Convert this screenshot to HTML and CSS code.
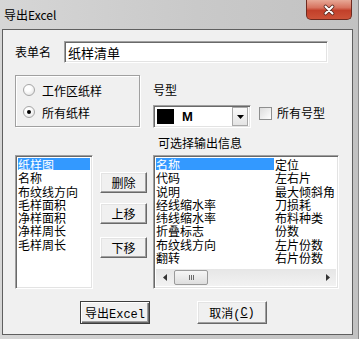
FILE: index.html
```html
<!DOCTYPE html>
<html lang="zh">
<head>
  <meta charset="UTF-8">
  <title>导出Excel</title>
  <link rel="stylesheet" href="styles.css">
</head>
<body>

  <div class="window">
    <div class="titlebar">
      <span class="title">导出Excel</span>
      <div class="close-btn">
        <svg width="14" height="12" viewBox="0 0 14 12">
          <path d="M3.5 2.5 L10.5 9.5 M10.5 2.5 L3.5 9.5" stroke="#5a2a20" stroke-width="3.6" stroke-linecap="round"/>
          <path d="M3.5 2.5 L10.5 9.5 M10.5 2.5 L3.5 9.5" stroke="#fff" stroke-width="2" stroke-linecap="round"/>
        </svg>
      </div>
    </div>

    <div class="client">
      <div class="name-row">
        <label class="name-label">表单名</label>
        <div class="edit">纸样清单</div>
      </div>

      <div class="options-row">
        <div class="group">
          <div class="radio-row"><span class="radio"></span>工作区纸样</div>
          <div class="radio-row"><span class="radio checked"></span>所有纸样</div>
        </div>

        <div class="size-col">
          <div class="size-label">号型</div>
          <div class="size-row">
            <div class="combo">
              <span class="swatch"></span>
              <span class="combo-text">M</span>
              <span class="combo-btn">
                <svg width="7" height="4" viewBox="0 0 7 4"><path d="M0 0 H7 L3.5 4 Z" fill="#000"/></svg>
              </span>
            </div>
            <div class="check-row"><span class="checkbox"></span>所有号型</div>
          </div>
        </div>
      </div>

      <div class="out-label">可选择输出信息</div>

      <div class="lists-row">
        <div class="listbox left-list">
          <div class="item selected">纸样图</div>
          <div class="item">名称</div>
          <div class="item">布纹线方向</div>
          <div class="item">毛样面积</div>
          <div class="item">净样面积</div>
          <div class="item">净样周长</div>
          <div class="item">毛样周长</div>
        </div>

        <div class="btn-col">
          <div class="btn small first">删除</div>
          <div class="btn small second">上移</div>
          <div class="btn small third">下移</div>
        </div>

        <div class="listbox right-list">
          <div class="columns">
            <div class="item selected">名称</div>
            <div class="item">代码</div>
            <div class="item">说明</div>
            <div class="item">经线缩水率</div>
            <div class="item">纬线缩水率</div>
            <div class="item">折叠标志</div>
            <div class="item">布纹线方向</div>
            <div class="item">翻转</div>
            <div class="item">定位</div>
            <div class="item">左右片</div>
            <div class="item">最大倾斜角</div>
            <div class="item">刀损耗</div>
            <div class="item">布料种类</div>
            <div class="item">份数</div>
            <div class="item">左片份数</div>
            <div class="item">右片份数</div>
          </div>
          <div class="hscroll">
            <span class="arrow">
              <svg width="4" height="7" viewBox="0 0 4 7"><path d="M4 0 V7 L0 3.5 Z" fill="#333"/></svg>
            </span>
            <span class="track">
              <span class="thumb"><span class="grip"></span><span class="grip"></span><span class="grip"></span></span>
            </span>
            <span class="arrow">
              <svg width="4" height="7" viewBox="0 0 4 7"><path d="M0 0 V7 L4 3.5 Z" fill="#333"/></svg>
            </span>
          </div>
        </div>
      </div>

      <div class="bottom-row">
        <div class="btn wide default">导出Excel</div>
        <div class="btn wide">取消(<u>C</u>)</div>
      </div>
    </div>
  </div>

</body>
</html>
```

FILE: styles.css
```css
body {
  margin: 0;
  padding: 0;
  font-family: "Noto Sans CJK SC", sans-serif;
  font-size: 12px;
  color: #000;
}

.window {
  width: 358px;
  height: 339px;
  background: linear-gradient(to right, #d6d6d6, #c9c9c9 55%, #c2c2c2);
  border-right: 1px solid #8a8a8a;
  overflow: hidden;
}

.titlebar {
  height: 29px;
  display: flex;
  justify-content: space-between;
  align-items: flex-start;
}

.title {
  margin: 7px 0 0 4px;
  line-height: 16px;
}

.close-btn {
  width: 44px;
  height: 19px;
  margin-right: 6px;
  border: 1px solid #6e2a1f;
  border-top: none;
  border-radius: 0 0 5px 5px;
  background: linear-gradient(#e7a896 0%, #d7735f 40%, #c2402a 55%, #cc5238 100%);
  display: flex;
  justify-content: center;
  align-items: center;
}

.client {
  margin: 0 5px 4px 2px;
  height: 304px;
  border: 1px solid #5f5f5f;
  background: #f0f0f0;
  padding-left: 12px;
  box-sizing: content-box;
}

/* name */
.name-row {
  display: flex;
  align-items: center;
  padding-top: 11px;
}

.name-label {
  width: 49px;
  line-height: 14px;
}

.edit,
.combo,
.listbox {
  background: #fff;
  border: 1px solid;
  border-color: #a0a0a0 #fff #fff #a0a0a0;
  box-shadow: inset 1px 1px #696969, inset -1px -1px #e3e3e3;
  box-sizing: border-box;
}

.edit {
  width: 264px;
  height: 22px;
  padding: 3px 0 0 3px;
  font-size: 13px;
  line-height: 15px;
}

/* options */
.options-row {
  display: flex;
  margin-top: 12px;
}

.group {
  width: 125px;
  height: 52px;
  border: 1px solid #a0a0a0;
  box-shadow: 1px 1px 0 #fff, inset 1px 1px 0 #fff;
  box-sizing: border-box;
  padding-top: 3px;
}

.radio-row {
  display: flex;
  align-items: center;
  height: 22px;
  padding-left: 7px;
}

.radio {
  width: 10px;
  height: 10px;
  border: 1px solid #a6a6a6;
  border-radius: 50%;
  background: radial-gradient(circle at 40% 35%, #fff 30%, #dcdcdc 100%);
  margin-right: 7px;
  display: flex;
  justify-content: center;
  align-items: center;
}

.radio.checked::after {
  content: "";
  width: 4px;
  height: 4px;
  border-radius: 50%;
  background: #000;
}

.size-col {
  margin-left: 13px;
}

.size-label {
  margin-top: 8px;
  margin-bottom: 8px;
  line-height: 14px;
}

.size-row {
  display: flex;
  align-items: flex-start;
}

.combo {
  width: 98px;
  height: 23px;
  display: flex;
  align-items: center;
  padding: 2px 1px 2px 3px;
}

.swatch {
  width: 17px;
  height: 15px;
  background: #000;
}

.combo-text {
  margin-left: 8px;
  font-weight: bold;
  font-family: "Liberation Sans", sans-serif;
  font-size: 13px;
  flex: 1;
}

.combo-btn {
  width: 16px;
  height: 19px;
  border: 1px solid #a9a9a9;
  background: linear-gradient(#fafafa, #e4e4e4);
  box-sizing: border-box;
  display: flex;
  justify-content: center;
  align-items: center;
  margin-right: 1px;
}

.check-row {
  display: flex;
  align-items: center;
  margin: 1px 0 0 8px;
  line-height: 14px;
}

.checkbox {
  width: 11px;
  height: 11px;
  border: 1px solid #8e8f8f;
  background: linear-gradient(135deg, #dcdcdc, #fff);
  margin-right: 5px;
}

.out-label {
  margin-top: 8px;
  padding-left: 143px;
  line-height: 14px;
}

/* lists */
.lists-row {
  display: flex;
  margin-top: 5px;
}

.listbox {
  height: 134px;
  padding: 2px;
  overflow: hidden;
}

.item {
  line-height: 13px;
  height: 13.25px;
  white-space: nowrap;
}

.item.selected {
  background: #3399ff;
  color: #fff;
  height: 12px;
  margin-bottom: 1.25px;
}

.left-list {
  width: 78px;
}

.btn-col {
  display: flex;
  flex-direction: column;
  margin-left: 7px;
}

.btn {
  background: #f0f0f0;
  border: 1px solid;
  border-color: #fff #696969 #696969 #fff;
  box-shadow: inset -1px -1px #a0a0a0, inset 1px 1px #e3e3e3;
  box-sizing: border-box;
  display: flex;
  justify-content: center;
  align-items: center;
}

.btn.small {
  width: 47px;
  height: 21px;
}

.btn.first { margin-top: 17px; }
.btn.second { margin-top: 10px; }
.btn.third { margin-top: 13px; }

.right-list {
  width: 186px;
  margin-left: 6px;
  display: flex;
  flex-direction: column;
}

.columns {
  flex: 1;
  display: grid;
  grid-auto-flow: column;
  grid-template-rows: repeat(8, 13.25px);
  grid-template-columns: 119px 120px;
  align-content: start;
}

.columns .item.selected {
  margin-right: 1px;
}

.hscroll {
  height: 17px;
  display: flex;
  background: linear-gradient(#e6e6e6, #f2f2f2);
}

.arrow {
  width: 17px;
  display: flex;
  justify-content: center;
  align-items: center;
}

.track {
  flex: 1;
  display: flex;
  align-items: center;
}

.thumb {
  width: 34px;
  height: 15px;
  margin-left: 1px;
  border: 1px solid #9a9a9a;
  border-radius: 2px;
  background: linear-gradient(#f6f6f6, #dedede);
  box-sizing: border-box;
  display: flex;
  justify-content: center;
  align-items: center;
  gap: 1px;
}

.grip {
  width: 1px;
  height: 5px;
  background: #6a6a6a;
}

/* bottom */
.bottom-row {
  display: flex;
  margin-top: 12px;
  padding-left: 65px;
  gap: 47px;
}

.btn.wide {
  width: 70px;
  height: 23px;
  font-family: "Liberation Mono", "Noto Sans CJK SC", monospace;
}

.btn.default {
  border-color: #3c3c3c;
  box-shadow: inset 1px 1px #fff, inset -1px -1px #696969, inset -2px -2px #a0a0a0;
}
```
